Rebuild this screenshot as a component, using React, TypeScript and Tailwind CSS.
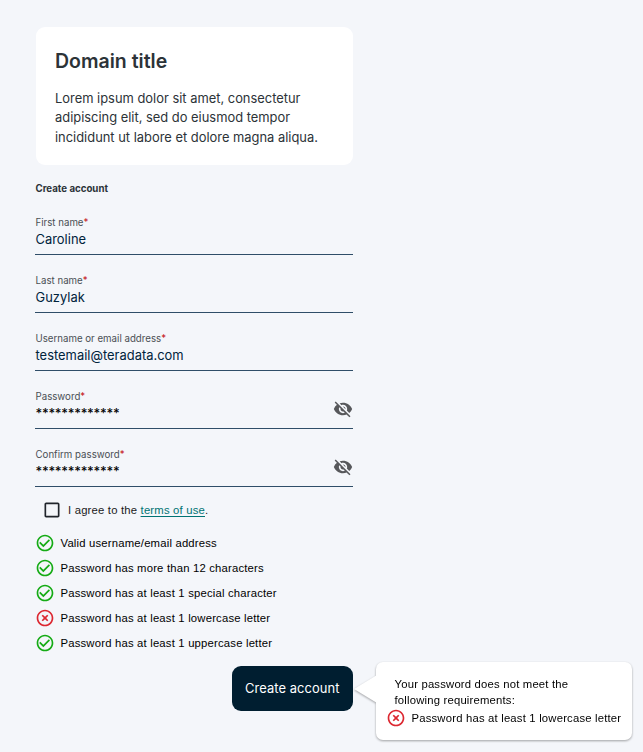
import React from "react";
import { MdVisibilityOff, MdCheckBoxOutlineBlank, MdCheckCircleOutline, MdHighlightOff } from "react-icons/md";

function Field({ label, value, secret = false }: { label: string; value: string; secret?: boolean }) {
  return (
    <div className="h-[58px] border-b border-[#2f4d68] pt-[19px]">
      <div className="h-[14px] pl-[0.5px] text-[9.7px] leading-[14px] text-[#4a4f54]">
        {label}
        <span className="text-[#c4161c]">*</span>
      </div>
      {secret ? (
        <div className="flex h-[20px] items-start justify-between">
          <span className="pl-[0.5px] text-[12.9px] font-medium leading-[20px] tracking-[-0.26px] text-black">{value}</span>
          <MdVisibilityOff className="-mt-[5px] size-[20px] text-[#57585b]" />
        </div>
      ) : (
        <div className="h-[20px] pl-[0.5px] text-[12.9px] leading-[20px] tracking-[0.02px] text-[#00233c]">{value}</div>
      )}
    </div>
  );
}

function Requirement({ met, children }: { met: boolean; children: React.ReactNode }) {
  return (
    <div className="flex h-[25px] items-center whitespace-nowrap">
      {met ? <MdCheckCircleOutline className="size-[20px] text-[#15ab15]" /> : <MdHighlightOff className="size-[20px] text-[#dc2730]" />}
      <span className="ml-[5.5px] font-['Liberation_Sans',sans-serif] text-[11.3px] leading-[16px] tracking-[0.19px] text-black">{children}</span>
    </div>
  );
}

export default function App() {
  return (
    <main className="h-[752px] w-[643px] overflow-hidden bg-[#f4f6fa] pl-[35px] pt-[27px] font-['Inter',sans-serif]">
      <div className="w-[318px]">
        <section className="ml-[0.5px] h-[138px] w-[317px] rounded-[9px] bg-white px-[19.5px] pt-[21px] text-[#2c3338]">
          <h1 className="text-[19.5px] font-semibold leading-[26px]">Domain title</h1>
          <p className="mt-[15px] whitespace-nowrap text-[12.9px] leading-[19.4px]">
            Lorem ipsum dolor sit amet, consectetur
            <br />
            adipiscing elit, sed do eiusmod tempor
            <br />
            incididunt ut labore et dolore magna aliqua.
          </p>
        </section>
        <h2 className="mt-[16px] h-[16px] pl-[0.5px] pt-px text-[9.7px] font-bold leading-[14px] text-[#2c3338]">Create account</h2>
        <form>
          <Field label="First name" value="Caroline" />
          <Field label="Last name" value="Guzylak" />
          <Field label="Username or email address" value="testemail@teradata.com" />
          <Field label="Password" value="*************" secret />
          <Field label="Confirm password" value="*************" secret />
        </form>
        <label className="ml-[7px] mt-[13px] flex h-[20px] items-center font-['Liberation_Sans',sans-serif] text-[11.3px] tracking-[0.19px] text-[#1a1a1a]">
          <MdCheckBoxOutlineBlank className="mr-[6px] size-[20px] text-[#20242b]" />
          <span>
            I agree to the <a className="text-[#007373] underline underline-offset-2">terms of use</a>.
          </span>
        </label>
        <div className="mt-[10px]">
          <Requirement met>Valid username/email address</Requirement>
          <Requirement met>Password has more than 12 characters</Requirement>
          <Requirement met>Password has at least 1 special character</Requirement>
          <Requirement met={false}>Password has at least 1 lowercase letter</Requirement>
          <Requirement met>Password has at least 1 uppercase letter</Requirement>
        </div>
      </div>
      <div className="flex pl-[197px] pt-[7px]">
        <button className="mt-[4px] h-[45px] w-[120.5px] shrink-0 whitespace-nowrap rounded-[9px] bg-[#001e30] text-[12.9px] tracking-[0.1px] text-white">Create account</button>
        <aside className="relative ml-[23.5px] h-[78px] w-[256px] shrink-0 rounded-[7px] bg-white pl-[18.5px] pt-[14px] drop-shadow-[0_1px_1px_rgba(0,0,0,0.35)]">
          <svg className="absolute -left-[22px] top-[13px] h-[28px] w-[23px]" viewBox="0 0 23 28">
            <path d="M23 0 L0 14 L23 28 Z" fill="white" />
          </svg>
          <p className="font-['Liberation_Sans',sans-serif] text-[11.3px] leading-[16px] tracking-[0.19px] text-black">
            Your password does not meet the
            <br />
            following requirements:
          </p>
          <div className="-ml-[8.5px] -mt-[3px]">
            <Requirement met={false}>Password has at least 1 lowercase letter</Requirement>
          </div>
        </aside>
      </div>
    </main>
  );
}
